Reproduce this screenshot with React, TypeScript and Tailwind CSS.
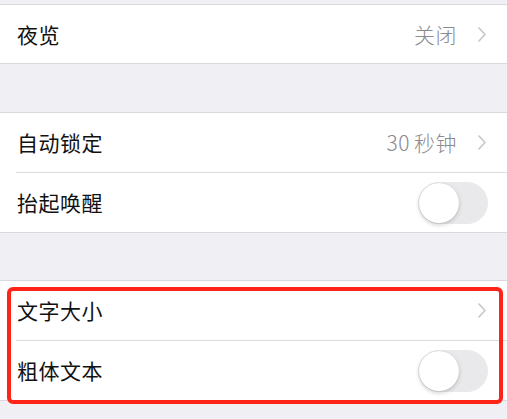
import React from "react";

const font = { fontFamily: '"Noto Sans CJK SC", "Noto Sans", sans-serif' };

function Chevron() {
  return (
    <svg width="8" height="15" viewBox="0 0 8 15" className="shrink-0">
      <path d="M1 1 L7 7.5 L1 14" fill="none" stroke="#c7c7cc" strokeWidth="1.7" strokeLinecap="round" strokeLinejoin="round" />
    </svg>
  );
}

function Toggle() {
  return (
    <div className="relative w-[70px] h-[42px] rounded-full bg-[#e9e9eb] shrink-0">
      <div className="absolute left-[1px] top-[1px] w-[40px] h-[40px] rounded-full bg-white shadow-[0_2px_4px_rgba(0,0,0,0.18),0_0_1px_rgba(0,0,0,0.15)]" />
    </div>
  );
}

function Row({ title, value, chevron, toggle, h = "h-[59px]" }: { title: string; value?: React.ReactNode; chevron?: boolean; toggle?: boolean; h?: string }) {
  return (
    <div className={`flex items-center bg-white pl-[17px] ${h} ${toggle ? "pr-[19px]" : "pr-[21px]"}`}>
      <span className="text-[21px] font-normal text-[#111] leading-none tracking-[0.5px]">{title}</span>
      <div className="ml-auto flex items-center">
        {value && <span className="text-[21px] font-light text-[#8a8a8f] leading-none mr-[21px] tracking-[0.5px]">{value}</span>}
        {chevron && <Chevron />}
        {toggle && <Toggle />}
      </div>
    </div>
  );
}

export default function App() {
  return (
    <div className="relative w-[507px] h-[419px] overflow-hidden bg-[#efeff4]" style={font}>
      <div className="h-[4px]" />
      <div className="border-y border-[#d9d9dd]">
        <Row title="夜览" value="关闭" chevron h="h-[58px]" />
      </div>
      <div className="h-[48px]" />
      <div className="border-y border-[#d9d9dd] bg-white">
        <Row title="自动锁定" value={<>30<span className="ml-[4px]">秒钟</span></>} chevron />
        <div className="ml-[16px] h-px bg-[#dcdce0]" />
        <Row title="抬起唤醒" toggle />
      </div>
      <div className="h-[47px]" />
      <div className="border-y border-[#d9d9dd] bg-white">
        <Row title="文字大小" chevron />
        <div className="ml-[16px] h-px bg-[#dcdce0]" />
        <Row title="粗体文本" toggle />
      </div>
      <div className="absolute left-[7px] top-[287px] w-[496px] h-[117px] border-[4px] border-[#ff2418] rounded-[6px] pointer-events-none" />
    </div>
  );
}
